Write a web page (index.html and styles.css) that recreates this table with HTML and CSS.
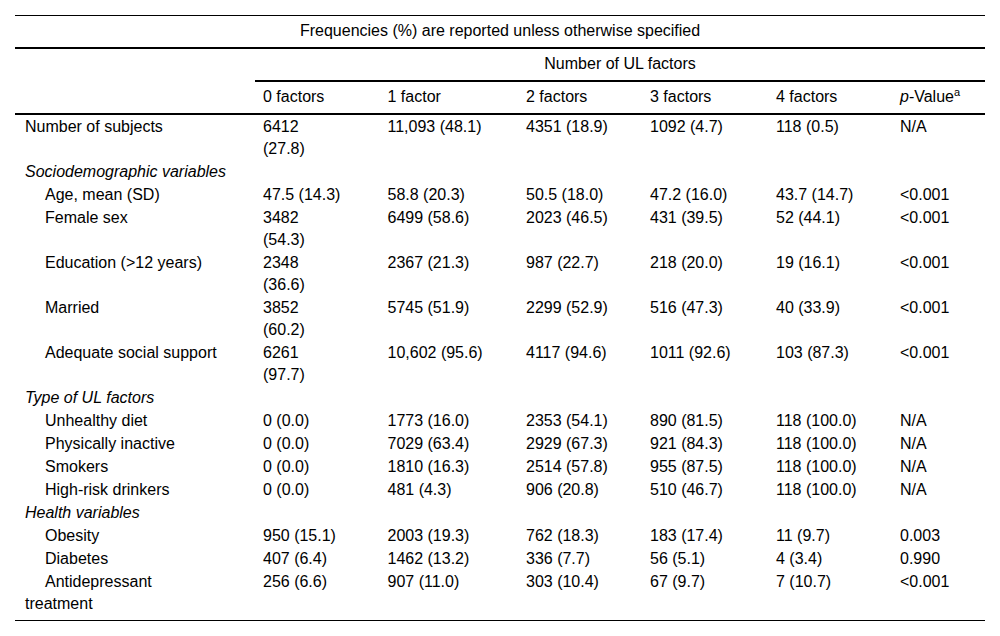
FILE: index.html
```html
<!DOCTYPE html>
<html lang="en">
<head>
<meta charset="utf-8">
<title>UL factors table</title>
<link rel="stylesheet" href="styles.css">
</head>
<body>
<table class="data">
  <colgroup>
    <col class="w-label">
    <col class="w-c1">
    <col class="w-c2">
    <col class="w-c3">
    <col class="w-c4">
    <col class="w-c5">
    <col class="w-c6">
  </colgroup>
  <thead>
    <tr>
      <th class="caption" colspan="7">Frequencies (%) are reported unless otherwise specified</th>
    </tr>
    <tr>
      <th class="blank"></th>
      <th class="group" colspan="6">Number of UL factors</th>
    </tr>
    <tr class="heads">
      <th class="lab"></th>
      <th>0 factors</th>
      <th>1 factor</th>
      <th>2 factors</th>
      <th>3 factors</th>
      <th>4 factors</th>
      <th><i>p</i>-Value<sup>a</sup></th>
    </tr>
  </thead>
  <tbody>
    <tr>
      <td class="lab">Number of subjects</td>
      <td class="c1">6412 (27.8)</td><td>11,093 (48.1)</td><td>4351 (18.9)</td><td>1092 (4.7)</td><td>118 (0.5)</td><td>N/A</td>
    </tr>
    <tr>
      <td class="lab sec" colspan="7">Sociodemographic variables</td>
    </tr>
    <tr>
      <td class="lab"><span class="ind"></span>Age, mean (SD)</td>
      <td class="c1">47.5 (14.3)</td><td>58.8 (20.3)</td><td>50.5 (18.0)</td><td>47.2 (16.0)</td><td>43.7 (14.7)</td><td>&lt;0.001</td>
    </tr>
    <tr>
      <td class="lab"><span class="ind"></span>Female sex</td>
      <td class="c1">3482 (54.3)</td><td>6499 (58.6)</td><td>2023 (46.5)</td><td>431 (39.5)</td><td>52 (44.1)</td><td>&lt;0.001</td>
    </tr>
    <tr>
      <td class="lab"><span class="ind"></span>Education (&gt;12 years)</td>
      <td class="c1">2348 (36.6)</td><td>2367 (21.3)</td><td>987 (22.7)</td><td>218 (20.0)</td><td>19 (16.1)</td><td>&lt;0.001</td>
    </tr>
    <tr>
      <td class="lab"><span class="ind"></span>Married</td>
      <td class="c1">3852 (60.2)</td><td>5745 (51.9)</td><td>2299 (52.9)</td><td>516 (47.3)</td><td>40 (33.9)</td><td>&lt;0.001</td>
    </tr>
    <tr>
      <td class="lab"><span class="ind"></span>Adequate social support</td>
      <td class="c1">6261 (97.7)</td><td>10,602 (95.6)</td><td>4117 (94.6)</td><td>1011 (92.6)</td><td>103 (87.3)</td><td>&lt;0.001</td>
    </tr>
    <tr>
      <td class="lab sec" colspan="7">Type of UL factors</td>
    </tr>
    <tr>
      <td class="lab"><span class="ind"></span>Unhealthy diet</td>
      <td class="c1">0 (0.0)</td><td>1773 (16.0)</td><td>2353 (54.1)</td><td>890 (81.5)</td><td>118 (100.0)</td><td>N/A</td>
    </tr>
    <tr>
      <td class="lab"><span class="ind"></span>Physically inactive</td>
      <td class="c1">0 (0.0)</td><td>7029 (63.4)</td><td>2929 (67.3)</td><td>921 (84.3)</td><td>118 (100.0)</td><td>N/A</td>
    </tr>
    <tr>
      <td class="lab"><span class="ind"></span>Smokers</td>
      <td class="c1">0 (0.0)</td><td>1810 (16.3)</td><td>2514 (57.8)</td><td>955 (87.5)</td><td>118 (100.0)</td><td>N/A</td>
    </tr>
    <tr>
      <td class="lab"><span class="ind"></span>High-risk drinkers</td>
      <td class="c1">0 (0.0)</td><td>481 (4.3)</td><td>906 (20.8)</td><td>510 (46.7)</td><td>118 (100.0)</td><td>N/A</td>
    </tr>
    <tr>
      <td class="lab sec" colspan="7">Health variables</td>
    </tr>
    <tr>
      <td class="lab"><span class="ind"></span>Obesity</td>
      <td class="c1">950 (15.1)</td><td>2003 (19.3)</td><td>762 (18.3)</td><td>183 (17.4)</td><td>11 (9.7)</td><td>0.003</td>
    </tr>
    <tr>
      <td class="lab"><span class="ind"></span>Diabetes</td>
      <td class="c1">407 (6.4)</td><td>1462 (13.2)</td><td>336 (7.7)</td><td>56 (5.1)</td><td>4 (3.4)</td><td>0.990</td>
    </tr>
    <tr class="last">
      <td class="lab"><span class="ind"></span>Antidepressant<br>treatment</td>
      <td class="c1">256 (6.6)</td><td>907 (11.0)</td><td>303 (10.4)</td><td>67 (9.7)</td><td>7 (10.7)</td><td>&lt;0.001</td>
    </tr>
  </tbody>
</table>
</body>
</html>
```

FILE: styles.css
```css
html, body {
  background: #ffffff;
}

body {
  margin: 15px;
  font-family: "Liberation Sans", Arial, sans-serif;
  font-size: 16px;
  color: #000000;
}

.data {
  width: 970px;
  table-layout: fixed;
  border-collapse: separate;
  border-spacing: 0;
  line-height: 22px;
}

.w-label { width: 240px; }
.w-c1 { width: 124.5px; }
.w-c2 { width: 138.5px; }
.w-c3 { width: 124px; }
.w-c4 { width: 126px; }
.w-c5 { width: 124px; }
.w-c6 { width: 93px; }

.data th {
  font-weight: normal;
  text-align: left;
  vertical-align: top;
  padding: 4px 8px 5px;
}

.data th.caption {
  text-align: center;
  border-top: 1px solid #000;
  border-bottom: 2px solid #000;
  padding-left: 10px;
  padding-right: 10px;
}

.data th.group {
  text-align: center;
  border-bottom: 2px solid #000;
}

.data tr.heads th {
  border-bottom: 2px solid #000;
}

.data th.lab,
.data td.lab {
  padding-left: 10px;
}

.data td {
  vertical-align: top;
  text-align: left;
  padding: 1px 8px 0;
}

.data td.c1 {
  padding-right: 36px;
}

.data td.sec {
  font-style: italic;
}

.ind {
  display: inline-block;
  width: 20px;
}

.data sup {
  font-size: 11px;
  line-height: 0;
  vertical-align: 6px;
}

.data tr.last td {
  padding-bottom: 5px;
  border-bottom: 1px solid #000;
}
```
